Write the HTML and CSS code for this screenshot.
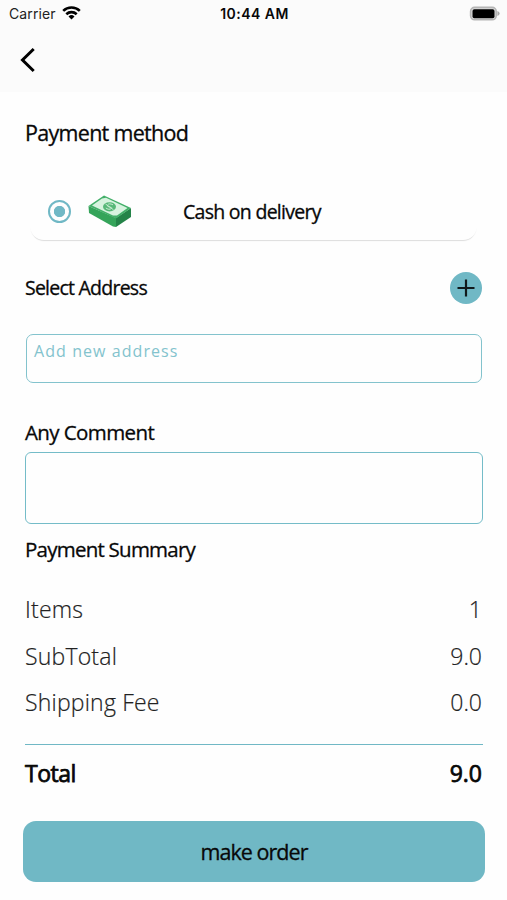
FILE: index.html
```html
<!DOCTYPE html>
<html lang="en">
<head>
<meta charset="utf-8">
<title>Checkout</title>
<link rel="stylesheet" href="styles.css">
</head>
<body>
<div class="screen">
  <header class="top">
    <div class="status">
      <div class="carrier"><span>Carrier</span>
        <svg width="19" height="14" viewBox="0 0 19 14" fill="none" stroke="#000" stroke-width="2.6"><path d="M1.2 4.9A12 12 0 0 1 17.8 4.9M4.3 8.2A7.5 7.5 0 0 1 14.7 8.2"/><path d="M9.5 13.4L6.5 10.4A4.3 4.3 0 0 1 12.5 10.4Z" fill="#000" stroke="none"/></svg>
      </div>
      <div class="time">10:44 AM</div>
      <svg class="battery" width="31" height="16" viewBox="0 0 31 16"><rect x="1.6" y="1.4" width="25.600" height="12.400" rx="4" fill="#ddd" stroke="#b5b5b5" stroke-width="1.6"/><rect x="3.500" y="3.200" width="22" height="9" rx="1.8"/><path d="M28.4 5Q30.6 5.8 30.6 7.5T28.4 10Z" fill="#aaa"/></svg>
    </div>
    <div class="nav">
      <svg width="18" height="26" viewBox="0 0 18 26" fill="none" stroke="#000" stroke-width="3"><path d="M14.7 2L3.5 13L14.7 24"/></svg>
    </div>
  </header>
  <main class="content">
    <h1 class="title">Payment method</h1>
    <div class="method">
      <span class="radio"></span>
      <svg class="cash" width="44" height="33" viewBox="0 0 44 33">
        <path d="M.5 11L28 23V32L25 31.500L1 18Z" fill="#35a45a"/>
        <path d="M28 23L43 13V22L28 32Z" fill="#248348"/>
        <path d="M.5 11L16 .5L43 13L28 23.500Z" fill="#43af69"/>
        <path d="M4 10.500L14 3.500L18 2.800L39.500 13L29 20.500L25 20.500Z" fill="#d7f3df"/>
        <ellipse cx="21.500" cy="11.800" rx="6.500" ry="4.600" fill="#57b878"/>
        <path d="M25 9.800Q21 7.800 19.500 10Q19 12 22 12Q25 12.500 22.500 14.200Q20 14.800 17.800 13M17.500 9L25.500 14.800" fill="none" stroke="#c6ebd0" stroke-width="1"/>
      </svg>
      <span class="method-name">Cash on delivery</span>
    </div>
    <div class="address-head">
      <h2 class="label address-label">Select Address</h2>
      <span class="add"><svg width="18" height="18" viewBox="0 0 18 18" stroke="#10191b" stroke-width="2.2"><path d="M9 .5V17.500M.5 9H17.500"/></svg></span>
    </div>
    <div class="address">Add new address</div>
    <h2 class="label comment-label">Any Comment</h2>
    <div class="comment"></div>
    <h2 class="label summary-label">Payment Summary</h2>
    <div class="rows">
      <div class="row"><span class="name">Items</span><span>1</span></div>
      <div class="row"><span class="name">SubTotal</span><span>9.0</span></div>
      <div class="row"><span class="name">Shipping Fee</span><span>0.0</span></div>
    </div>
    <div class="row total"><span class="total-name">Total</span><span>9.0</span></div>
    <div class="order">make order</div>
  </main>
</div>
</body>
</html>
```
FILE: styles.css
```css
* { box-sizing: border-box; }
body { margin: 0; background: #fefefe; color: #080808; font-family: "Open Sans", "Noto Sans", sans-serif; }
.screen { width: 507px; height: 900px; overflow: hidden; }
.top { height: 92px; background: #fbfbfb; font-family: Inter, "Liberation Sans", sans-serif; }
.status { height: 27px; padding: 0 7px 0 9px; display: grid; grid-template-columns: 1fr auto 1fr; align-items: center; font-size: 14px; }
.carrier { display: flex; align-items: center; gap: 6px; color: #222; letter-spacing: 0.1px; }
.carrier svg { margin-top: -2px; }
.time { font-weight: 600; font-size: 14px; letter-spacing: 0.45px; }
.battery { justify-self: end; margin-top: 0; }
.nav { height: 65px; padding: 20px 0 0 19px; }
.nav svg { display: block; }
.content { padding: 0 24px 0 25px; }
h1, h2 { margin: 0; font-weight: 400; white-space: nowrap; }
h1, h2, .method-name, .order { -webkit-text-stroke: 0.3px currentColor; }
.title { height: 84px; padding-top: 26px; font-size: 21.5px; line-height: 30px; letter-spacing: -0.7px; }
.method { height: 64px; margin: 0 6px 0 5px; padding: 6px 18px 0; display: flex; align-items: center; border-radius: 14px; box-shadow: 0 1.5px 1px -1px #ddd; background: #fefefe; }
.radio { width: 23px; height: 23px; border: 2.5px solid #70b8c5; border-radius: 50%; background: radial-gradient(circle, #70b8c5 5.3px, #fefefe 6px); }
.cash { margin-left: 17px; }
.method-name { margin-left: 51px; font-size: 19.5px; letter-spacing: -0.72px; white-space: nowrap; }
.address-head { height: 94px; padding-top: 2px; padding-right: 1px; display: flex; justify-content: space-between; align-items: center; }
.label { font-size: 20.5px; line-height: 26px; letter-spacing: -0.76px; }
.address-label { font-size: 19.5px; }
.add { width: 32px; height: 32px; border-radius: 50%; background: #70b8c5; display: flex; align-items: center; justify-content: center; }
.address { height: 49px; margin: 0 1px; padding: 5px 7px; border: 1px solid #83c3cd; border-radius: 7px; font-size: 16px; line-height: 22px; letter-spacing: 1.07px; color: #83c3cd; }
.comment-label { margin-top: 36px; height: 33px; letter-spacing: -0.6px; }
.comment { height: 72px; border: 1px solid #74bcc8; border-radius: 6px; }
.summary-label { margin-top: 12px; height: 50px; }
.rows { height: 159px; border-bottom: 1px solid #70b8c5; }
.row { height: 46.500px; padding-right: 1px; display: flex; justify-content: space-between; align-items: center; font-size: 23px; font-weight: 300; color: #222; -webkit-text-stroke: 0.2px currentColor; }
.name { letter-spacing: 0.2px; }
.total { height: 76px; padding-bottom: 20px; font-weight: 400; color: #080808; -webkit-text-stroke: 0.75px currentColor; }
.total-name { letter-spacing: -0.5px; }
.order { height: 61px; margin: 0 -2px; border-radius: 13px; background: #70b8c5; font-size: 21.5px; letter-spacing: -0.95px; display: flex; align-items: center; justify-content: center; }
```
